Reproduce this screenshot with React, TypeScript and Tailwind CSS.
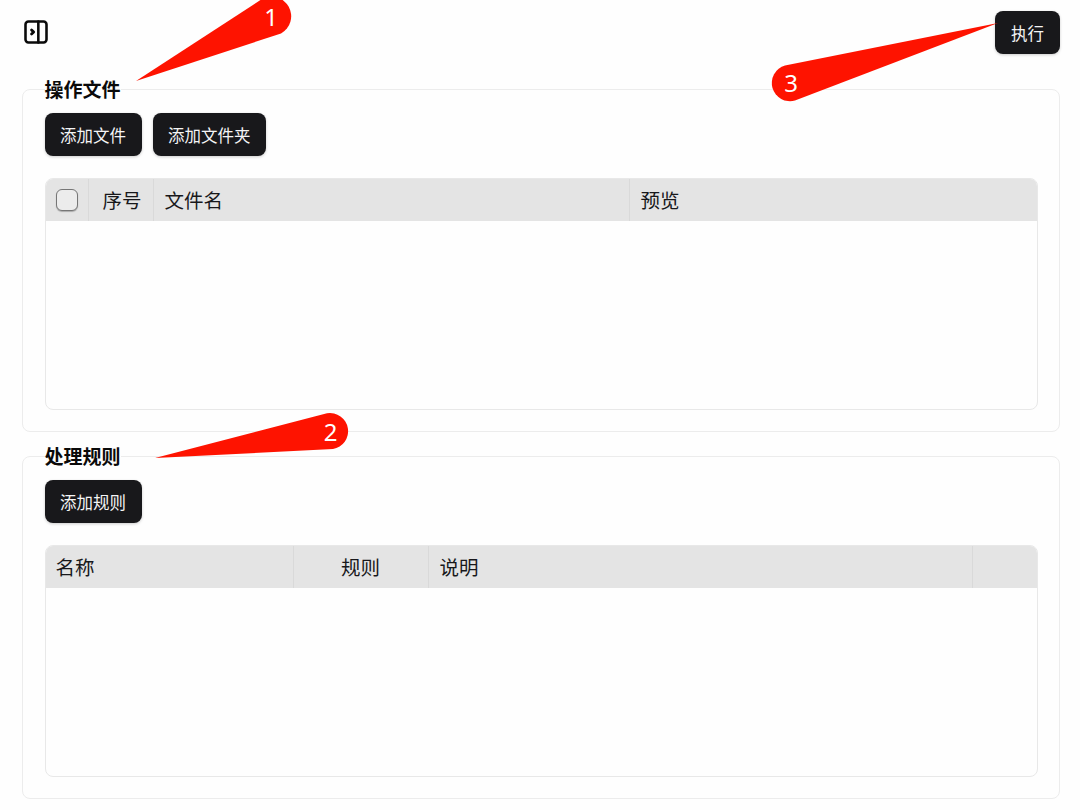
import React from 'react';

const font = '"Noto Sans", "Noto Sans CJK SC", sans-serif';

const DarkButton = ({ label, wide }: { label: string; wide?: boolean }) => (
  <button className={`h-[43px] pt-[3px] rounded-[8px] bg-[#18181b] text-[#f4f4f5] text-[16.5px] leading-none shadow-[0_1px_3px_rgba(0,0,0,0.2)] ${wide ? 'px-[16px]' : 'px-[15.5px]'}`}>
    {label}
  </button>
);

const Column = ({ width, center, last, children }: { width: string; center?: boolean; last?: boolean; children?: React.ReactNode }) => (
  <div className={`${width} h-full flex items-center px-[11px] text-[19.5px] text-[#18181b] ${center ? 'justify-center' : ''} ${last ? '' : 'border-r border-[#d9d9d9]'}`}>
    {children}
  </div>
);

const TableBox = ({ children }: { children: React.ReactNode }) => (
  <div className="mt-[22px] h-[232px] rounded-[8px] border border-[#e8e8e8] overflow-hidden">
    <div className="h-[43px] -mt-px -mx-px flex bg-[#e4e4e4]">{children}</div>
  </div>
);

const Section = ({ title, className, children }: { title: string; className?: string; children: React.ReactNode }) => (
  <fieldset className={`ml-[22px] mr-[20px] px-[21.5px] pb-[21px] border border-[#ececec] rounded-[8px] ${className ?? ''}`}>
    <legend className="h-[26px] text-[19px] leading-[28px] font-bold text-[#0a0a0a]">{title}</legend>
    <div className="pt-[11px]">{children}</div>
  </fieldset>
);

export default function App() {
  return (
    <div className="relative h-[810px] overflow-hidden bg-[#fefefe]" style={{ fontFamily: font }}>
      <div className="h-[54px] pt-[11px] pl-[22px] pr-[20px] flex justify-between">
        <svg width="28" height="28" viewBox="0 0 24 24" fill="none" stroke="#0a0a0a" strokeWidth="2.2" strokeLinecap="round" strokeLinejoin="round" className="mt-[7px]">
          <rect x="3" y="3" width="18" height="18" rx="2.5" />
          <path d="M14 3v18" />
          <path d="m8.2 10.2 1.8 1.8-1.8 1.8" strokeWidth="2.4" />
        </svg>
        <DarkButton label="执行" wide />
      </div>

      <Section title="操作文件" className="mt-[22px]">
        <div className="flex gap-[11px]">
          <DarkButton label="添加文件" />
          <DarkButton label="添加文件夹" />
        </div>
        <TableBox>
          <div className="w-[44px] h-full flex items-center justify-center border-r border-[#d9d9d9]">
            <span className="block w-[22px] h-[22px] ml-px rounded-[6px] border border-[#767676] bg-[#ececec] shadow-[0_1px_1px_rgba(0,0,0,0.25)]" />
          </div>
          <Column width="w-[65px]" center><span className="pt-[3px] ml-[3px] shrink-0">序号</span></Column>
          <Column width="w-[476px]"><span className="pt-[3px]">文件名</span></Column>
          <Column width="flex-1" last><span className="pt-[3px]">预览</span></Column>
        </TableBox>
      </Section>

      <Section title="处理规则" className="mt-[11px]">
        <DarkButton label="添加规则" />
        <TableBox>
          <Column width="w-[249px]"><span className="pt-[3px]">名称</span></Column>
          <Column width="w-[135px]" center><span className="pt-[3px]">规则</span></Column>
          <Column width="w-[544px]"><span className="pt-[3px]">说明</span></Column>
          <Column width="flex-1" last />
        </TableBox>
      </Section>

      {/* red annotation callouts on top of the screenshot */}
      <svg className="absolute inset-0 pointer-events-none" width="1080" height="810" viewBox="0 0 1080 810">
        <path d="M136 81 L262 -1 A19.5 19.5 0 0 1 281 33.5 Z" fill="#fe1300" />
        <path d="M155 458 L327 413.3 A18 18 0 0 1 333 449 Z" fill="#fe1300" />
        <path d="M998 23 L785 65.5 A18 18 0 0 0 795 100.5 Z" fill="#fe1300" />
        <text x="271" y="26" textAnchor="middle" fill="#fff" fontSize="24">1</text>
        <text x="330.5" y="441" textAnchor="middle" fill="#fff" fontSize="24">2</text>
        <text x="791" y="92" textAnchor="middle" fill="#fff" fontSize="24">3</text>
      </svg>
    </div>
  );
}
